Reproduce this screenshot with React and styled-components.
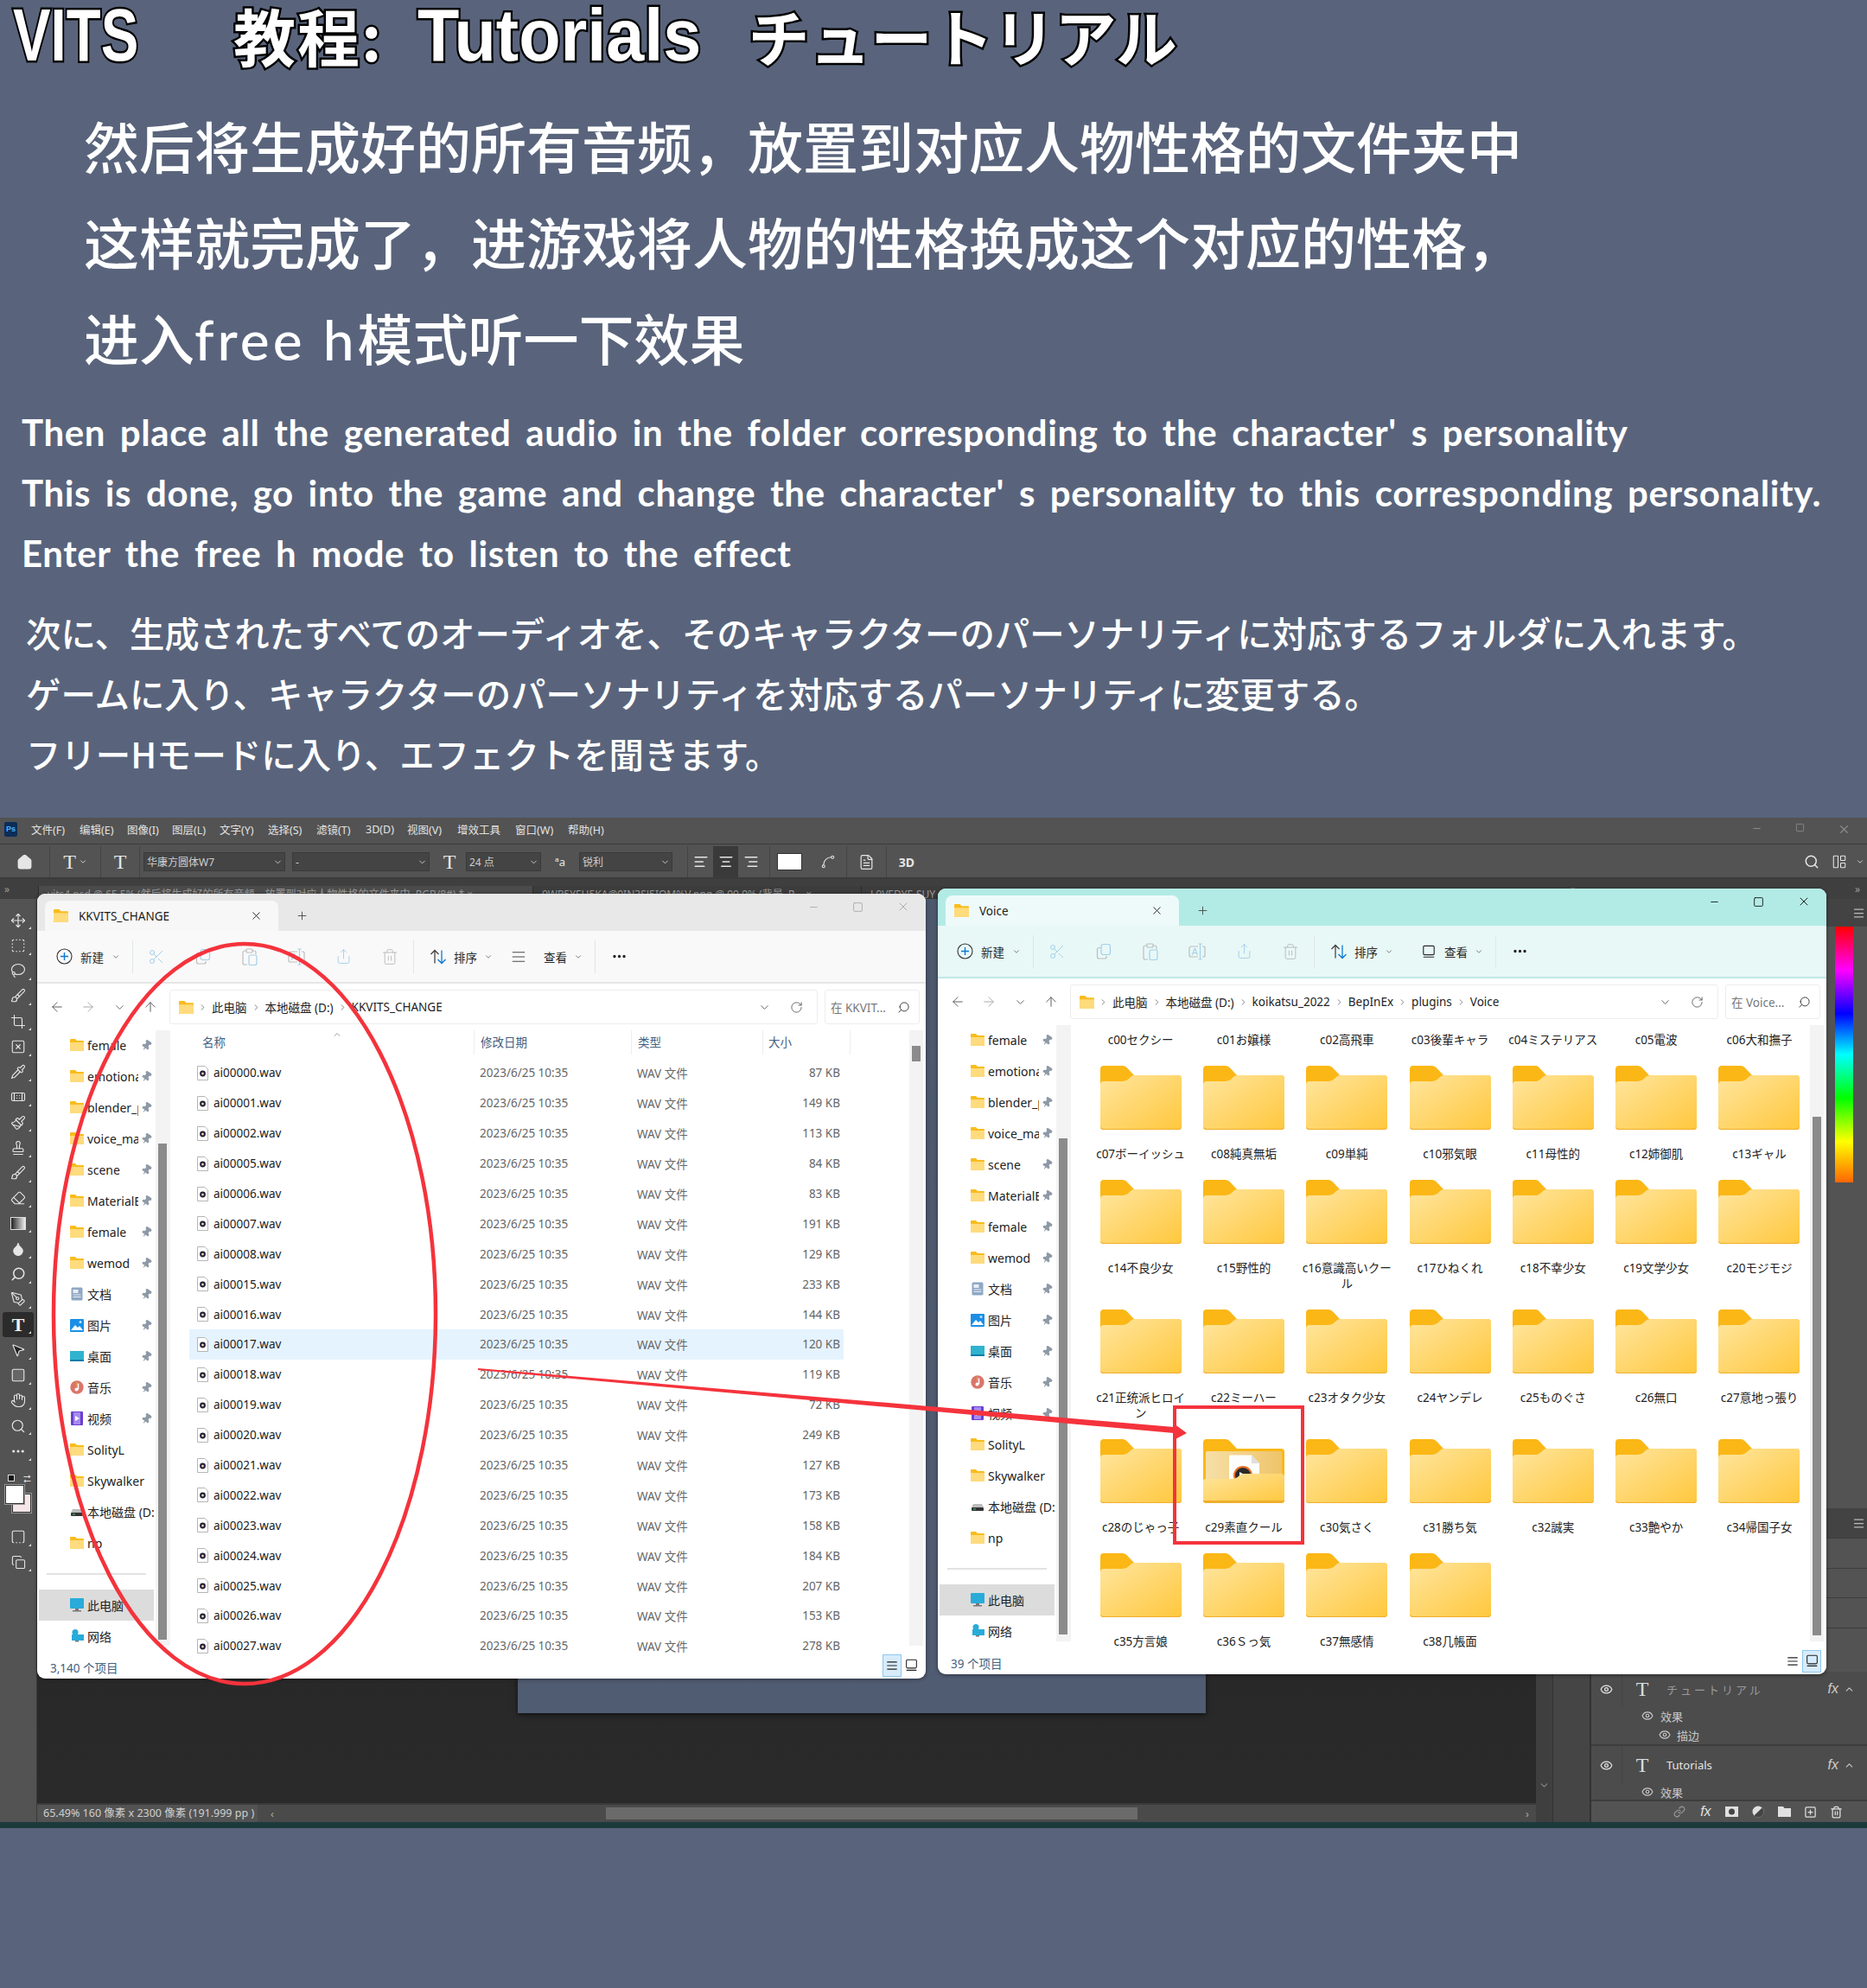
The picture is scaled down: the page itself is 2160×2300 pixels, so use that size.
import React from "react";
import styled, { createGlobalStyle } from "styled-components";
import {
  Move, SquareDashed, Lasso, Brush, Crop, SquareX, Pipette, Bandage, Paintbrush, Stamp, Eraser, Droplet, Search, PenTool, MousePointer2, Hand, Ellipsis, House, Square,
  Scissors, Copy, Share, Trash2, AlignJustify, ArrowLeft, ArrowRight, ChevronDown, ChevronRight, ChevronUp, ArrowUp, RotateCw, Pin, Plus, X, Minus, Eye, Link, SquareDashedBottom, FileText, Menu, Spline, LayoutPanelLeft, AlignCenter, AlignLeft, AlignRight, SquarePlus
} from "lucide-react";

const UI = `"Noto Sans", "Noto Sans CJK SC", sans-serif`;
const UIJ = `"Noto Sans", "Noto Sans CJK JP", sans-serif`;

const Global = createGlobalStyle`
  html, body { margin: 0; padding: 0; background: #59647c; }
  * { box-sizing: border-box; }
`;

const Page = styled.div`
  position: relative;
  width: 2160px;
  height: 2300px;
  overflow: hidden;
  background: #59647c;
  color: #fff;
  font-family: ${UI};
`;

const Intro = styled.header`
  height: 946px;
  display: flex;
  flex-direction: column;
`;
const Title = styled.h1`
  margin: 0;
  height: 80px;
  display: flex;
  align-items: center;
  padding-left: 15px;
  font-weight: 700;
  line-height: 80px;
  color: #fff;
  -webkit-text-stroke: 5px #000;
  paint-order: stroke fill;
`;
const TitleLatin = styled.span`
  display: inline-block;
  font-family: "Liberation Sans", sans-serif;
  font-size: 86px;
  width: ${(p) => p.$w}px;
  transform: scaleX(${(p) => p.$sx});
  transform-origin: left center;
  white-space: nowrap;
  -webkit-text-stroke: 5px #000;
  paint-order: stroke fill;
`;
const TitleCjk = styled.span`
  display: inline-block;
  font-family: "Noto Sans CJK JP", sans-serif;
  font-size: ${(p) => p.$fs}px;
  letter-spacing: ${(p) => p.$ls || 0}px;
  margin-right: ${(p) => p.$mr}px;
  white-space: nowrap;
  font-weight: 700;
`;
const CnBlock = styled.div`
  margin-top: 32px;
  padding-left: 97px;
  font-family: "Noto Sans CJK SC", sans-serif;
  font-size: 64px;
  font-weight: 500;
  line-height: 111px;
  white-space: nowrap;
`;
const FreeH = styled.span`
  font-family: "Lato", sans-serif;
  letter-spacing: 4px;
`;
const EnBlock = styled.div`
  margin-top: 17px;
  padding-left: 25px;
  font-family: "Lato", sans-serif;
  font-size: 42px;
  font-weight: 700;
  line-height: 70px;
  white-space: nowrap;
  letter-spacing: 0.6px;
  word-spacing: 6px;
`;
const JpBlock = styled.div`
  margin-top: 22px;
  padding-left: 30px;
  font-family: "Noto Sans CJK JP", sans-serif;
  font-size: 40.4px;
  font-weight: 500;
  line-height: 70px;
  white-space: nowrap;
`;

/* ------------- Photoshop ------------- */
const Ps = styled.div`
  height: 1169px;
  display: flex;
  flex-direction: column;
  background: #535353;
  color: #ddd;
`;
const MenuBar = styled.div`
  height: 31px;
  display: flex;
  align-items: center;
  padding: 0 0 3px 5px;
  background: #535353;
  border-bottom: 1px solid #3a3a3a;
  font-size: 12.5px;
  color: #e2e2e2;
`;
const PsLogo = styled.span`
  width: 15px;
  height: 17px;
  border-radius: 2px;
  background: #0b2d58;
  color: #4fb4ff;
  font: 700 9px/17px "Liberation Sans", sans-serif;
  text-align: center;
  margin-right: 16px;
`;
const MenuItem = styled.span`
  width: ${(p) => p.$w}px;
  white-space: nowrap;
`;
const PsWinBtns = styled.div`
  margin-left: auto;
  display: flex;
  gap: 38px;
  padding-right: 19px;
  color: #8a8a8a;
`;
const OptionsBar = styled.div`
  height: 40px;
  display: flex;
  align-items: center;
  padding-top: 2px;
  background: #535353;
  border-bottom: 2px solid #3b3b3b;
  color: #e6e6e6;
`;
const OptSlot = styled.div`
  width: ${(p) => p.$w}px;
  height: 100%;
  flex: none;
  display: flex;
  align-items: center;
  justify-content: center;
  gap: 3px;
  font-size: ${(p) => p.$fs || 13}px;
  font-weight: ${(p) => p.$fw || 400};
  ${(p) => (p.$sep ? "border-right: 1px solid #444;" : "")}
  ${(p) => (p.$on ? "background:#3a3a3a;" : "")}
`;
const OptT = styled.span`
  font: 24px "Liberation Serif", serif;
  color: #e6e6e6;
`;
const OptSelect = styled.div`
  width: ${(p) => p.$w}px;
  height: 22px;
  margin: 0 ${(p) => p.$m || 0}px;
  flex: none;
  background: #444;
  border: 1px solid #3a3a3a;
  display: flex;
  align-items: center;
  justify-content: space-between;
  padding: 0 2px 0 3px;
  font-size: 12px;
  color: #cfcfcf;
`;
const Swatch = styled.div`
  width: 29px;
  height: 20px;
  background: #fff;
  border: 1px solid #333;
  margin: 0 8px;
`;
const OptSpacer = styled.div`
  flex: 1;
`;
const DocTabs = styled.div`
  height: 23px;
  display: flex;
  align-items: flex-end;
  background: #3f3f3f;
  font-size: 12px;
  color: #9a9a9a;
  white-space: nowrap;
  overflow: hidden;
`;
const Collapse = styled.span`
  width: ${(p) => p.$w}px;
  flex: none;
  align-self: center;
  padding-left: ${(p) => p.$pl ?? 5}px;
  font-size: 12px;
  color: #9c9c9c;
`;
const DocTab = styled.span`
  width: ${(p) => p.$w}px;
  flex: none;
  height: 15px;
  line-height: 20px;
  padding-left: 10px;
  background: ${(p) => (p.$on ? "#4b4b4b" : "#3c3c3c")};
  border-left: 1px solid #2c2c2c;
  overflow: hidden;
`;
const Workspace = styled.div`
  flex: 1;
  min-height: 0;
  display: flex;
`;
const Tools = styled.div`
  width: 43px;
  flex: none;
  padding-top: 10px;
  display: flex;
  flex-direction: column;
  align-items: center;
  background: #535353;
  border-right: 1px solid #3a3a3a;
  color: #e6e6e6;
`;
const Tool = styled.div`
  position: relative;
  width: 36px;
  height: 29.25px;
  flex: none;
  display: flex;
  align-items: center;
  justify-content: center;
  border-radius: 3px;
  ${(p) => (p.$on ? "background:#2b2b2b;" : "")}
  &::after {
    content: "";
    position: absolute;
    right: 3px;
    bottom: 4px;
    border-left: 3px solid transparent;
    border-bottom: 3px solid #ddd;
  }
`;
const ToolT = styled.span`
  font: 700 22px/1 "Liberation Serif", serif;
  color: #f0f0f0;
`;
const GradientBox = styled.span`
  width: 18px;
  height: 15px;
  border: 1px solid #ddd;
  background: linear-gradient(90deg, #222, #eee);
`;
const ColorPair = styled.div`
  position: relative;
  width: 36px;
  height: 52px;
  margin: 12px 0 6px;
`;
const MiniReset = styled.span`
  position: absolute;
  left: 6px;
  top: 0;
  width: 8px;
  height: 8px;
  background: #111;
  border: 1px solid #ddd;
`;
const MiniSwap = styled.span`
  position: absolute;
  left: 24px;
  top: -3px;
  font-size: 11px;
  color: #ddd;
`;
const Chip = styled.span`
  position: absolute;
  width: 22px;
  height: 22px;
  left: ${(p) => p.$l}px;
  top: ${(p) => p.$t}px;
  background: ${(p) => p.$c};
  border: 1px solid #333;
  box-shadow: 0 0 0 1px #999;
`;
const CanvasCol = styled.div`
  flex: 1;
  min-width: 0;
  display: flex;
  flex-direction: column;
`;
const Canvas = styled.div`
  flex: 1;
  min-height: 0;
  background: linear-gradient(#1f1f1f, #2a2a2a);
  padding-left: 556px;
`;
const Doc = styled.div`
  width: 796px;
  height: 942px;
  background: linear-gradient(#4c586c, #505c72);
  box-shadow: 0 2px 6px rgba(0, 0, 0, 0.6);
`;
const PsStatus = styled.div`
  height: 22px;
  flex: none;
  display: flex;
  align-items: center;
  background: #4a4a4a;
  border-top: 2px solid #3a3a3a;
  font-size: 12.5px;
  color: #cfcfcf;
`;
const StatusText = styled.span`
  width: 255px;
  flex: none;
  padding-left: 7px;
  line-height: 20px;
  background: #535353;
  white-space: nowrap;
`;
const HThumbTrack = styled.div`
  flex: 1;
  display: flex;
  align-items: center;
  height: 100%;
  padding: 0 8px 0 15px;
  color: #aaa;
`;
const HThumb = styled.div`
  width: 615px;
  height: 14px;
  margin-left: 384px;
  margin-right: auto;
  background: #6b6b6b;
`;
const VScrollCol = styled.div`
  width: 19px;
  flex: none;
  background: #3f3f3f;
  display: flex;
  flex-direction: column;
  justify-content: flex-end;
  align-items: center;
  padding-bottom: 36px;
  color: #888;
`;
const Gutter = styled.div`
  width: 45px;
  flex: none;
  background: #454545;
  border-left: 1px solid #333;
  border-right: 2px solid #333;
`;
const RightPanel = styled.div`
  width: 319px;
  flex: none;
  display: flex;
  flex-direction: column;
  background: #535353;
`;
const PanelHead = styled.div`
  height: 32px;
  flex: none;
  display: flex;
  align-items: center;
  justify-content: flex-end;
  padding-right: 2px;
  background: #434343;
  color: #bbb;
`;
const Rainbow = styled.div`
  width: 21px;
  height: 296px;
  flex: none;
  margin-left: 282px;
  background: linear-gradient(#f00 0%, #f0f 17%, #00f 34%, #0ff 50%, #0f0 67%, #ff0 84%, #f60 100%);
`;
const PanelBand = styled.div`
  margin-top: ${(p) => p.$mt || 0}px;
  height: ${(p) => p.$h}px;
  flex: none;
  display: flex;
  align-items: center;
  justify-content: flex-end;
  padding-right: 2px;
  background: ${(p) => p.$bg || "#535353"};
  border-bottom: 1px solid #3d3d3d;
  color: #bbb;
`;
const Layers = styled.div`
  margin-top: auto;
  display: flex;
  flex-direction: column;
  background: #4c4c4c;
`;
const LayerRow = styled.div`
  height: ${(p) => p.$h}px;
  flex: none;
  display: flex;
  align-items: center;
  padding-left: ${(p) => p.$pl || 0}px;
  padding-right: 14px;
  gap: ${(p) => p.$gap || 0}px;
  font-size: 13px;
  color: #c8c8c8;
  overflow: hidden;
  ${(p) => (p.$div ? "border-top: 2px solid #3d3d3d;" : "")}
`;
const EyeCol = styled.div`
  width: 36px;
  height: 100%;
  flex: none;
  display: flex;
  align-items: center;
  justify-content: center;
  border-right: 1px solid #444;
  color: #e4e4e4;
`;
const LayerT = styled.span`
  width: 46px;
  text-align: center;
  font: 24px "Liberation Serif", serif;
  color: #ddd;
`;
const LayerName = styled.span`
  margin-left: 5px;
  color: ${(p) => p.$c};
  font-family: ${(p) => (p.$jp ? UIJ : UI)};
  letter-spacing: ${(p) => p.$ls || 0}px;
`;
const LayerFx = styled.span`
  margin-left: auto;
  padding-right: 6px;
  font: italic 16px "Liberation Sans", sans-serif;
  color: #ccc;
`;
const LayerFoot = styled.div`
  height: 26px;
  flex: none;
  display: flex;
  align-items: center;
  justify-content: flex-end;
  padding-right: 20px;
  background: #535353;
  border-top: 2px solid #3d3d3d;
  color: #e0e0e0;
`;
const FootSlot = styled.span`
  width: 30.3px;
  display: flex;
  justify-content: center;
  font: italic 16px "Liberation Sans", sans-serif;
`;
const PsEdge = styled.div`
  height: 7px;
  flex: none;
  background: #1c3a3c;
`;

/* ------------- Explorer ------------- */
const Win = styled.section`
  position: absolute;
  left: ${(p) => p.$x}px;
  top: ${(p) => p.$y}px;
  width: ${(p) => p.$w}px;
  height: ${(p) => p.$h}px;
  display: flex;
  flex-direction: column;
  background: #fff;
  border-radius: 9px;
  overflow: hidden;
  color: #1c1c1c;
  font-family: ${UI};
  font-size: 13.5px;
  box-shadow: 0 1px 4px rgba(0, 0, 0, 0.45);
`;
const WinTitle = styled.div`
  height: 43px;
  flex: none;
  display: flex;
  align-items: flex-end;
  padding-left: 9px;
  background: ${(p) => (p.$teal ? "#b2ebe5" : "#e8e8e8")};
`;
const WinTab = styled.div`
  width: 270px;
  height: 35px;
  display: flex;
  align-items: center;
  padding: 0 18px 0 10px;
  background: ${(p) => (p.$teal ? "#eefafa" : "#f7f7f7")};
  border-radius: 8px 8px 0 0;
`;
const TabName = styled.span`
  margin-left: 12px;
  font-size: 13.5px;
  flex: 1;
`;
const TabPlus = styled.span`
  width: 54px;
  height: 35px;
  display: flex;
  align-items: center;
  justify-content: center;
  color: #444;
`;
const WinBtns = styled.div`
  margin-left: auto;
  align-self: flex-start;
  display: flex;
  height: 30px;
  align-items: center;
  padding-right: 18px;
  gap: 38px;
  color: ${(p) => (p.$dim ? "#a8a8a8" : "#111")};
`;
const WinToolbar = styled.div`
  height: 61px;
  flex: none;
  display: flex;
  align-items: center;
  padding-left: 22px;
  background: ${(p) => (p.$teal ? "#e8f8f7" : "#f9f9f9")};
  border-bottom: 2px solid ${(p) => (p.$teal ? "#c0e8e3" : "#e6e6e6")};
`;
const TbBtn = styled.div`
  width: ${(p) => p.$w}px;
  flex: none;
  height: 36px;
  display: flex;
  align-items: center;
  justify-content: ${(p) => (p.$center ? "center" : "flex-start")};
  gap: ${(p) => p.$gap ?? 8}px;
  padding-left: ${(p) => p.$pl || 0}px;
  font-size: 13.5px;
  color: #2a2a2a;
`;
const ViewLabel = styled.span`
  margin-left: ${(p) => p.$ml}px;
`;
const TbSep = styled.div`
  width: 1px;
  height: 38px;
  flex: none;
  background: #e0e6e6;
`;
const AddrRow = styled.div`
  height: 54px;
  flex: none;
  display: flex;
  align-items: center;
  padding-left: 5px;
  color: #5a5a5a;
`;
const NavBtn = styled.div`
  width: 36px;
  flex: none;
  display: flex;
  justify-content: center;
  color: ${(p) => (p.$dim ? "#a9a9a9" : "#5a5a5a")};
`;
const AddrBox = styled.div`
  width: 750px;
  height: 40px;
  flex: none;
  margin-left: 4px;
  display: flex;
  align-items: center;
  gap: 5px;
  padding: 0 10px;
  border: 1px solid #ededed;
  border-radius: 3px;
  font-size: 13.5px;
  color: #222;
`;
const AddrEnd = styled.div`
  margin-left: auto;
  display: flex;
  gap: 22px;
  padding-right: 6px;
  color: #555;
`;
const SearchBox = styled.div`
  width: 110px;
  height: 40px;
  flex: none;
  margin-left: 8px;
  display: flex;
  align-items: center;
  justify-content: space-between;
  padding: 0 10px 0 6px;
  border: 1px solid #ededed;
  border-radius: 3px;
  font-size: 13.5px;
  color: #777;
  white-space: nowrap;
`;
const FlipSearch = styled(Search)`
  transform: scaleX(-1);
`;
const WinBody = styled.div`
  flex: 1;
  min-height: 0;
  display: flex;
`;
const Nav = styled.nav`
  width: 137px;
  flex: none;
  margin-top: -1px;
  display: flex;
  flex-direction: column;
`;
const NavRow = styled.div`
  height: 36px;
  flex: none;
  display: flex;
  align-items: center;
  margin-left: ${(p) => (p.$top ? 2 : 0)}px;
  margin-right: ${(p) => (p.$top ? 2 : 0)}px;
  padding-left: ${(p) => (p.$top ? 36 : 38)}px;
  font-size: 14px;
  color: #222;
  ${(p) => (p.$on ? "background:#dcdcdc;" : "")}
`;
const NavLabel = styled.span`
  width: ${(p) => p.$w}px;
  margin-left: 4px;
  overflow: hidden;
  white-space: nowrap;
  flex: none;
`;
const NavPin = styled(Pin)`
  margin-left: 3px;
  transform: rotate(35deg);
`;
const NavChevron = styled.span`
  width: 0;
  position: relative;
  left: -22px;
  color: #777;
  display: inline-flex;
`;
const NavDivider = styled.div`
  height: 2px;
  flex: none;
  margin: 17px 11px 17px 11px;
  background: #e2e2e2;
`;
const NavTrack = styled.div`
  width: 17px;
  flex: none;
  background: #f3f3f3;
  padding: ${(p) => p.$top}px 3px 0 3px;
  margin-right: 3px;
  margin-bottom: 6px;
`;
const NavThumb = styled.div`
  width: 10px;
  height: 574px;
  background: #8b8b8b;
`;
const ListPane = styled.div`
  flex: 1;
  min-width: 0;
  display: flex;
  flex-direction: column;
`;
const ListHead = styled.div`
  height: 28px;
  flex: none;
  margin-bottom: 4px;
  display: grid;
  grid-template-columns: 349px 182px 152px 101px;
  color: #44607e;
  font-size: 13.5px;
  align-items: center;
`;
const HeadCell = styled.div`
  padding-left: ${(p) => p.$pl}px;
  line-height: 28px;
  ${(p) => (p.$sep ? "border-right: 1px solid #eeeeee;" : "")}
  position: relative;
`;
const SortCaret = styled.span`
  position: absolute;
  left: 184px;
  top: -8px;
  color: #9a9a9a;
`;
const FileRow = styled.div`
  height: 34.9px;
  flex: none;
  display: grid;
  grid-template-columns: 336px 182px 152px 87px;
  align-items: center;
  width: 757px;
  margin-left: 19px;
  color: #666;
  background: ${(p) => (p.$on ? "#e5f3ff" : "transparent")};
`;
const FileName = styled.div`
  padding-left: 9px;
  display: flex;
  align-items: center;
  gap: 6px;
  color: #222;
`;
const FileCell = styled.div`
  ${(p) => (p.$right ? "text-align: right; padding-right: 4px;" : "")}
`;
const VBar = styled.div`
  width: 16px;
  flex: none;
  margin: 0 3px 6px 0;
  background: #f3f3f3;
  padding-top: ${(p) => p.$top}px;
  display: flex;
  justify-content: center;
`;
const VThumb = styled.div`
  width: 10px;
  height: ${(p) => p.$h}px;
  background: #8b8b8b;
`;
const WinStatus = styled.div`
  height: 32px;
  flex: none;
  display: flex;
  align-items: center;
  padding: 5px 0 0 15px;
  font-size: 13.5px;
  color: #44607e;
`;
const ViewBtns = styled.div`
  margin-left: auto;
  height: 100%;
  display: flex;
  align-items: center;
  padding: 0 6px 4px 0;
  color: #222;
`;
const ViewBtn = styled.div`
  width: 22px;
  height: 26px;
  display: flex;
  align-items: center;
  justify-content: center;
  ${(p) => (p.$on ? "background:#d7ecfb; border:1px solid #8fc7ec;" : "")}
`;
const FolderGrid = styled.div`
  flex: 1;
  min-width: 0;
  display: grid;
  grid-template-columns: repeat(7, 119.3px);
  grid-auto-rows: min-content;
  padding-left: 18px;
  padding-top: 8px;
  align-content: start;
`;
const FolderCell = styled.div`
  display: flex;
  flex-direction: column;
  align-items: center;
  padding-bottom: 21px;
`;
const FolderLabel = styled.div`
  width: 108px;
  margin-top: ${(p) => (p.$only ? 0 : 19)}px;
  text-align: center;
  line-height: 18px;
  font-family: ${UIJ};
  font-size: 13.5px;
  color: #222;
  word-break: break-all;
`;
const Markup = styled.svg`
  position: absolute;
  left: 0;
  top: 0;
  width: 2160px;
  height: 2300px;
  pointer-events: none;
`;

/* ---- drawings ---- */
function FolderArt({ open }) {
  const id = open ? "fo" : "fc";
  return (
    <svg width="94" height="74" viewBox="0 0 94 74">
      <defs>
        <linearGradient id={id} x1="0" y1="0" x2="1" y2="1">
          <stop offset="0" stopColor="#ffe59e" />
          <stop offset="1" stopColor="#ffc83e" />
        </linearGradient>
        <linearGradient id="fi" x1="0" y1="0" x2="1" y2="0">
          <stop offset="0" stopColor="#f6dfa6" />
          <stop offset="1" stopColor="#efc46a" />
        </linearGradient>
      </defs>
      <path d="M4 0H26q3 0 5 2.500l8 8.500H90q4 0 4 4V70q0 4-4 4H4q-4 0-4-4V4q0-4 4-4z" fill="#fbb716" />
      {open ? (
        <>
          <rect x="3" y="14" width="88" height="38" rx="2" fill="url(#fi)" />
          <path d="M30 18.500H56L65 28V50H30z" fill="#fdfdfd" />
          <path d="M56 18.500V28H65z" fill="#dedede" />
          <circle cx="46" cy="42" r="11" fill="#e8702a" />
          <circle cx="46" cy="42" r="9" fill="#2a2a2a" />
          <path d="M42 38l8 4h-8z" fill="#fff" />
          <path d="M0 49q0-3 3-3H34q4 0 7-3l1-1q2-2 5-2H90q4 0 4 4V70q0 3-4 3H4q-4 0-4-3z" fill={`url(#${id})`} />
          <path d="M0 71q0 3 4 3H90q4 0 4-3z" fill="#efae2b" />
        </>
      ) : (
        <>
          <path d="M0 22q0-4 4-4H26q4 0 7-3l2-2q2-2 5-2H90q4 0 4 4V70q0 3-4 3H4q-4 0-4-3z" fill={`url(#${id})`} />
          <path d="M0 70q0 3 4 3H90q4 0 4-3v1q0 3-4 3H4q-4 0-4-3z" fill="#efae2b" />
        </>
      )}
    </svg>
  );
}
const SmallFolder = ({ size = 16 }) => (
  <svg width={size} height={size} viewBox="0 0 16 16" style={{ flex: "none" }}>
    <path d="M0 2q0-1 1-1H6l2 2h7q1 0 1 1v10q0 1-1 1H1q-1 0-1-1z" fill="#f9bc1c" />
    <path d="M0 5h16v9q0 1-1 1H1q-1 0-1-1z" fill="#fedb7c" />
  </svg>
);
const NavGlyph = ({ kind }) => {
  const wrap = (c) => <svg width="16" height="16" viewBox="0 0 16 16" style={{ flex: "none" }}>{c}</svg>;
  switch (kind) {
    case "doc":
      return wrap(<><rect x="1.500" y="0.500" width="13" height="15" rx="1.500" fill="#8ea7c4" /><rect x="3.500" y="3" width="6" height="4" fill="#e8eef5" /><path d="M3.500 9h9M3.500 11.500h9" stroke="#e8eef5" /></>);
    case "pic":
      return wrap(<><rect x="0" y="1" width="16" height="15" rx="1" fill="#1b8fe6" /><path d="M1 14l5-6 3 3 2-2 4 5z" fill="#fff" /><circle cx="12" cy="4.500" r="1.500" fill="#bfe4ff" /></>);
    case "desk":
      return wrap(<><rect x="-1" y="2" width="18" height="12" rx="1" fill="#2fb3cf" /><rect x="-1" y="12" width="18" height="2" fill="#0d7da6" /></>);
    case "music":
      return wrap(<><circle cx="8" cy="8" r="7.700" fill="#d9766a" /><path d="M8 8.500a7.700 7.700 0 0 1 0-8.200z" fill="#e89a4a" /><path d="M9.500 3.500v7" stroke="#fff" strokeWidth="1.500" /><circle cx="7.500" cy="10.500" r="2" fill="#fff" /></>);
    case "video":
      return wrap(<><rect x="1" y="0" width="14" height="16" rx="1" fill="#6b3fd0" /><rect x="4" y="1" width="8" height="14" fill="#a68af0" /><path d="M6 5l5 3-5 3z" fill="#fff" /></>);
    case "disk":
      return wrap(<><path d="M3 5h10l2 4H1z" fill="#bdbdbd" /><rect x="1" y="9" width="14" height="4" rx="1" fill="#333" /><rect x="3" y="10.500" width="3" height="1" fill="#35d06a" /></>);
    case "pc":
      return wrap(<><rect x="0" y="0" width="16" height="12" rx="1" fill="#29abd9" /><rect x="6" y="12" width="4" height="2" fill="#777" /><rect x="3" y="14" width="10" height="1.500" fill="#777" /></>);
    case "net":
      return wrap(<><circle cx="6" cy="3.500" r="3.500" fill="#29abd9" /><rect x="2" y="6" width="14" height="7" fill="#29abd9" /><rect x="6" y="13" width="4" height="1.500" fill="#777" /></>);
    default:
      return <SmallFolder />;
  }
};
const WavIcon = () => (
  <svg width="13" height="17" viewBox="0 0 13 17" style={{ flex: "none" }}>
    <path d="M.5.5H9L12.500 4V16.500H.5z" fill="#fff" stroke="#b5b5b5" />
    <circle cx="6.500" cy="9" r="3.400" fill="#20203a" />
    <circle cx="6.500" cy="9" r="1.500" fill="#f1a06b" />
    <circle cx="6.500" cy="9" r="0.700" fill="#fff" />
  </svg>
);
const NewIcon = () => (
  <svg width="19" height="19" viewBox="0 0 19 19" fill="none">
    <circle cx="9.500" cy="9.500" r="8.500" stroke="#333" strokeWidth="1.100" />
    <path d="M9.500 5v9M5 9.500h9" stroke="#0a78d4" strokeWidth="1.400" />
  </svg>
);
const CopyIcon = ({ g, b }) => (
  <svg width="20" height="20" viewBox="0 0 20 20" fill="none">
    <path d="M6 5.500H4.500a2 2 0 0 0-2 2V16a2 2 0 0 0 2 2H11a2 2 0 0 0 2-2v-1" stroke={g} strokeWidth="1.200" />
    <rect x="7" y="1.500" width="10.500" height="12" rx="2.500" stroke={b} strokeWidth="1.200" />
  </svg>
);
const PasteIcon = ({ g, b }) => (
  <svg width="20" height="20" viewBox="0 0 20 20" fill="none">
    <path d="M6 3H4a2 2 0 0 0-2 2v12a2 2 0 0 0 2 2h3M13 3h2a2 2 0 0 1 2 2v2" stroke={g} strokeWidth="1.200" />
    <rect x="6" y="1" width="7" height="4" rx="1" stroke={g} strokeWidth="1.200" />
    <rect x="9" y="8" width="9" height="11.500" rx="2" stroke={b} strokeWidth="1.200" />
  </svg>
);
const RenameIcon = ({ g, b }) => (
  <svg width="20" height="20" viewBox="0 0 20 20" fill="none">
    <path d="M11 4H3a2 2 0 0 0-2 2v8a2 2 0 0 0 2 2h8M16 4h1.500a1.500 1.500 0 0 1 1.500 2v8a2 2 0 0 1-2 2H16" stroke={g} strokeWidth="1.200" />
    <path d="M11.500 1h2v18h-2M15.500 1h-2M15.500 19h-2" stroke={b} strokeWidth="1.200" />
    <text x="3.500" y="14" fontSize="11" fontFamily="Liberation Sans" fill={b}>A</text>
  </svg>
);
const SortIcon = () => (
  <svg width="20" height="20" viewBox="0 0 20 20" fill="none" strokeWidth="1.300">
    <path d="M6 17.500V2.500M1.500 7L6 2.500 10.500 7" stroke="#444" />
    <path d="M14 2.500v15M9.500 13l4.500 4.500 4.500-4.500" stroke="#0a78d4" />
  </svg>
);
const TabletIcon = ({ size = 16 }) => (
  <svg width={size} height={size} viewBox="0 0 18 18" fill="none" stroke="currentColor" strokeWidth="1.300">
    <rect x="2" y="1.500" width="14" height="11.500" rx="1.500" />
    <path d="M2 16h14" />
  </svg>
);
const MaskIcon = () => (
  <svg width="15" height="12" viewBox="0 0 15 12"><rect width="15" height="12" fill="#e0e0e0" /><circle cx="7.500" cy="6" r="3.500" fill="#444" /></svg>
);
const AdjustIcon = () => (
  <svg width="14" height="14" viewBox="0 0 14 14"><circle cx="7" cy="7" r="6.500" fill="#e0e0e0" /><path d="M11.600 2.400a6.500 6.500 0 0 1-9.200 9.200z" fill="#444" /></svg>
);
const PsFolderIcon = () => (
  <svg width="15" height="12" viewBox="0 0 15 12"><path d="M0 0h6l1.500 2H15v10H0z" fill="#e0e0e0" /></svg>
);

/* ---- data ---- */
const navItems = [
  ["female", "folder", 1], ["emotional", "folder", 1], ["blender_proj", "folder", 1], ["voice_made", "folder", 1], ["scene", "folder", 1],
  ["MaterialEditor", "folder", 1], ["female", "folder", 1], ["wemod", "folder", 1], ["文档", "doc", 1], ["图片", "pic", 1], ["桌面", "desk", 1],
  ["音乐", "music", 1], ["视频", "video", 1], ["SolityL", "folder", 0], ["Skywalker", "folder", 0], ["本地磁盘 (D:)", "disk", 0], ["np", "folder", 0],
];
const files = [
  ["00000", 87], ["00001", 149], ["00002", 113], ["00005", 84], ["00006", 83], ["00007", 191], ["00008", 129], ["00015", 233], ["00016", 144], ["00017", 120],
  ["00018", 119], ["00019", 72], ["00020", 249], ["00021", 127], ["00022", 173], ["00023", 158], ["00024", 184], ["00025", 207], ["00026", 153], ["00027", 278],
];
const topLabels = ["c00セクシー", "c01お嬢様", "c02高飛車", "c03後輩キャラ", "c04ミステリアス", "c05電波", "c06大和撫子"];
const folders = [
  "c07ボーイッシュ", "c08純真無垢", "c09単純", "c10邪気眼", "c11母性的", "c12姉御肌", "c13ギャル",
  "c14不良少女", "c15野性的", "c16意識高いクール", "c17ひねくれ", "c18不幸少女", "c19文学少女", "c20モジモジ",
  "c21正统派ヒロイン", "c22ミーハー", "c23オタク少女", "c24ヤンデレ", "c25ものぐさ", "c26無口", "c27意地っ張り",
  "c28のじゃっ子", "c29素直クール", "c30気さく", "c31勝ち気", "c32誠実", "c33艶やか", "c34帰国子女",
  "c35方言娘", "c36Ｓっ気", "c37無感情", "c38几帳面",
];
const menus = [["文件(F)", 56], ["编辑(E)", 55], ["图像(I)", 52], ["图层(L)", 55], ["文字(Y)", 56], ["选择(S)", 56], ["滤镜(T)", 57], ["3D(D)", 48], ["视图(V)", 58], ["增效工具", 67], ["窗口(W)", 61], ["帮助(H)", 60]];
const toolIcons = [
  <Move size={18} strokeWidth={1.5} />, <SquareDashed size={18} strokeWidth={1.5} />, <Lasso size={18} strokeWidth={1.5} />, <Brush size={18} strokeWidth={1.5} />,
  <Crop size={18} strokeWidth={1.5} />, <SquareX size={18} strokeWidth={1.5} />, <Pipette size={18} strokeWidth={1.5} />, <Bandage size={18} strokeWidth={1.5} />,
  <Paintbrush size={18} strokeWidth={1.5} />, <Stamp size={18} strokeWidth={1.5} />, <Brush size={18} strokeWidth={1.5} />, <Eraser size={18} strokeWidth={1.5} />,
  <GradientBox />, <Droplet size={18} strokeWidth={1.5} fill="#e6e6e6" />, <FlipSearch size={18} strokeWidth={2} />, <PenTool size={18} strokeWidth={1.5} />,
  <ToolT>T</ToolT>, <MousePointer2 size={18} strokeWidth={1.5} fill="#222" />, <Square size={18} strokeWidth={1.5} fill="#666" />, <Hand size={18} strokeWidth={1.5} />,
  <Search size={18} strokeWidth={1.5} />, <Ellipsis size={18} strokeWidth={2.2} />,
];

const Window = ({ x, y, w, h, teal, title, crumbs, searchText, viewIcon, viewPl, viewMl, count, children, viewOn }) => {
  const g = "#bdbdbd";
  const b = "#a3d0ea";
  return (
    <Win $x={x} $y={y} $w={w} $h={h}>
      <WinTitle $teal={teal}>
        <WinTab $teal={teal}>
          <SmallFolder size={17} />
          <TabName>{title}</TabName>
          <X size={15} strokeWidth={1.4} />
        </WinTab>
        <TabPlus><Plus size={15} strokeWidth={1.4} /></TabPlus>
        <WinBtns $dim={!teal}>
          <Minus size={13} strokeWidth={1.6} />
          <Square size={13} strokeWidth={1.6} />
          <X size={16} strokeWidth={1.4} />
        </WinBtns>
      </WinTitle>
      <WinToolbar $teal={teal}>
        <TbBtn $w={88} $gap={9}>
          <NewIcon />
          新建
          <ChevronDown size={10} color="#666" />
        </TbBtn>
        <TbSep />
        <TbBtn $w={54} $center><Scissors size={20} strokeWidth={1.2} color={b} /></TbBtn>
        <TbBtn $w={54} $center><CopyIcon g={g} b={b} /></TbBtn>
        <TbBtn $w={54} $center><PasteIcon g={g} b={b} /></TbBtn>
        <TbBtn $w={54} $center><RenameIcon g={g} b={b} /></TbBtn>
        <TbBtn $w={54} $center><Share size={19} strokeWidth={1.2} color={b} /></TbBtn>
        <TbBtn $w={54} $center><Trash2 size={20} strokeWidth={1.2} color={g} /></TbBtn>
        <TbSep />
        <TbBtn $w={112} $pl={18}>
          <SortIcon />
          排序
          <ChevronDown size={10} color="#666" />
        </TbBtn>
        <TbBtn $w={97} $pl={viewPl}>
          {viewIcon}
          <ViewLabel $ml={viewMl}>查看</ViewLabel>
          <ChevronDown size={10} color="#666" />
        </TbBtn>
        <TbSep />
        <TbBtn $w={54} $center><Ellipsis size={19} color="#222" strokeWidth={2.2} /></TbBtn>
      </WinToolbar>
      <AddrRow>
        <NavBtn><ArrowLeft size={18} strokeWidth={1.3} /></NavBtn>
        <NavBtn $dim><ArrowRight size={18} strokeWidth={1.3} /></NavBtn>
        <NavBtn><ChevronDown size={15} strokeWidth={1.4} /></NavBtn>
        <NavBtn><ArrowUp size={18} strokeWidth={1.3} /></NavBtn>
        <AddrBox>
          <SmallFolder size={17} />
          {crumbs.map((t, i) => (
            <React.Fragment key={i}>
              <ChevronRight size={11} strokeWidth={1.6} color="#555" />
              <span>{t}</span>
            </React.Fragment>
          ))}
          <AddrEnd>
            <ChevronDown size={15} strokeWidth={1.4} />
            <RotateCw size={15} strokeWidth={1.4} />
          </AddrEnd>
        </AddrBox>
        <SearchBox>{searchText}<FlipSearch size={15} strokeWidth={1.6} color="#444" /></SearchBox>
      </AddrRow>
      <WinBody>
        <Nav>
          {navItems.map(([t, k, pin], i) => (
            <NavRow key={i}>
              <NavGlyph kind={k} />
              <NavLabel $w={pin ? 59 : 78}>{t}</NavLabel>
              {pin ? <NavPin size={13} color="#8d99a6" fill="#8d99a6" /> : null}
            </NavRow>
          ))}
          <NavDivider />
          <NavRow $top $on>
            <NavChevron><ChevronRight size={12} /></NavChevron>
            <NavGlyph kind="pc" /><NavLabel $w={60}>此电脑</NavLabel>
          </NavRow>
          <NavRow $top>
            <NavChevron><ChevronRight size={12} /></NavChevron>
            <NavGlyph kind="net" /><NavLabel $w={60}>网络</NavLabel>
          </NavRow>
        </Nav>
        <NavTrack $top={131}><NavThumb /></NavTrack>
        {children}
      </WinBody>
      <WinStatus>
        {count}
        <ViewBtns>
          <ViewBtn $on={!viewOn}><AlignJustify size={14} /></ViewBtn>
          <ViewBtn $on={viewOn}><TabletIcon size={15} /></ViewBtn>
        </ViewBtns>
      </WinStatus>
    </Win>
  );
};

export default function App() {
  return (
    <Page>
      <Global />
      <Intro>
        <Title>
          <TitleLatin $w={255} $sx={0.76}>VITS</TitleLatin>
          <TitleCjk $fs={72} $ls={2} $mr={40}>教程:</TitleCjk>
          <TitleLatin $w={382} $sx={0.92}>Tutorials</TitleLatin>
          <TitleCjk $fs={71} $mr={0}>チュートリアル</TitleCjk>
        </Title>
        <CnBlock>
          <div>然后将生成好的所有音频，放置到对应人物性格的文件夹中</div>
          <div>这样就完成了，进游戏将人物的性格换成这个对应的性格，</div>
          <div>进入<FreeH>free h</FreeH>模式听一下效果</div>
        </CnBlock>
        <EnBlock>
          <div>Then place all the generated audio in the folder corresponding to the character' s personality</div>
          <div>This is done, go into the game and change the character' s personality to this corresponding personality.</div>
          <div>Enter the free h mode to listen to the effect</div>
        </EnBlock>
        <JpBlock>
          <div>次に、生成されたすべてのオーディオを、そのキャラクターのパーソナリティに対応するフォルダに入れます。</div>
          <div>ゲームに入り、キャラクターのパーソナリティを対応するパーソナリティに変更する。</div>
          <div>フリーHモードに入り、エフェクトを聞きます。</div>
        </JpBlock>
      </Intro>

      <Ps>
        <MenuBar>
          <PsLogo>Ps</PsLogo>
          {menus.map(([m, w]) => <MenuItem key={m} $w={w}>{m}</MenuItem>)}
          <PsWinBtns>
            <Minus size={13} />
            <Square size={11} />
            <X size={15} />
          </PsWinBtns>
        </MenuBar>
        <OptionsBar>
          <OptSlot $w={58} $sep><House size={19} fill="#e6e6e6" /></OptSlot>
          <OptSlot $w={59} $sep><OptT>T</OptT><ChevronDown size={10} /></OptSlot>
          <OptSlot $w={45} $sep><OptT>T</OptT></OptSlot>
          <OptSelect $w={164} $m={4}>华康方圆体W7<ChevronDown size={11} /></OptSelect>
          <OptSelect $w={159} $m={4}>-<ChevronDown size={11} /></OptSelect>
          <OptSlot $w={38}><OptT>T</OptT></OptSlot>
          <OptSelect $w={87}>24 点<ChevronDown size={11} /></OptSelect>
          <OptSlot $w={44}>ªa</OptSlot>
          <OptSelect $w={108}>锐利<ChevronDown size={11} /></OptSelect>
          <OptSlot $w={18} $sep />
          <OptSlot $w={29}><AlignLeft size={18} /></OptSlot>
          <OptSlot $w={29} $on><AlignCenter size={18} /></OptSlot>
          <OptSlot $w={29}><AlignRight size={18} /></OptSlot>
          <OptSlot $w={8} $sep />
          <Swatch />
          <OptSlot $w={44} $sep><Spline size={18} strokeWidth={1.4} /></OptSlot>
          <OptSlot $w={46} $sep><FileText size={19} strokeWidth={1.5} /></OptSlot>
          <OptSlot $w={46} $fs={14} $fw={700}>3D</OptSlot>
          <OptSpacer />
          <OptSlot $w={32}><Search size={18} /></OptSlot>
          <OptSlot $w={32}><LayoutPanelLeft size={18} strokeWidth={1.4} /></OptSlot>
          <OptSlot $w={16}><ChevronDown size={10} /></OptSlot>
        </OptionsBar>
        <DocTabs>
          <Collapse $w={44}>»</Collapse>
          <DocTab $w={572} $on>vits4.psd @ 65.5% (然后将生成好的所有音频，放置到对应人物性格的文件夹中, RGB/8#) *  ×</DocTab>
          <DocTab $w={380}>0WP5YEH5KA@9IN3SJ5IOM%V.png @ 99.9% (背景, R...  ×</DocTab>
          <DocTab $w={300}>L0VEDYE-SUY</DocTab>
          <OptSpacer />
          <Collapse $w={325} $pl={0}>«</Collapse>
          <Collapse $w={19}>»</Collapse>
        </DocTabs>
        <Workspace>
          <Tools>
            {toolIcons.map((I, i) => (
              <Tool key={i} $on={i === 16}>{I}</Tool>
            ))}
            <ColorPair>
              <MiniReset />
              <MiniSwap>⮂</MiniSwap>
              <Chip $l={11} $t={22} $c="#f6e6e8" />
              <Chip $l={3} $t={12} $c="#fff" />
            </ColorPair>
            <Tool><SquareDashedBottom size={18} strokeWidth={1.5} /></Tool>
            <Tool><Copy size={17} strokeWidth={1.5} /></Tool>
          </Tools>
          <CanvasCol>
            <Canvas><Doc /></Canvas>
            <PsStatus>
              <StatusText>65.49% 160 像素 x 2300 像素 (191.999 pp )</StatusText>
              <HThumbTrack>
                ‹
                <HThumb />
                ›
              </HThumbTrack>
            </PsStatus>
          </CanvasCol>
          <VScrollCol><ChevronDown size={13} /></VScrollCol>
          <Gutter />
          <RightPanel>
            <PanelHead><Menu size={15} /></PanelHead>
            <Rainbow />
            <PanelBand $mt={377} $h={35} $bg="#434343"><Menu size={15} /></PanelBand>
            <PanelBand $h={35} />
            <PanelBand $h={34} />
            <PanelBand $h={35} />
            <Layers>
              <LayerRow $h={40}>
                <EyeCol><Eye size={15} /></EyeCol>
                <LayerT>T</LayerT>
                <LayerName $jp $c="#9a9a9a" $ls={3}>チュートリアル</LayerName>
                <LayerFx>fx</LayerFx>
                <ChevronUp size={13} />
              </LayerRow>
              <LayerRow $h={22} $pl={58} $gap={8}><Eye size={14} />效果</LayerRow>
              <LayerRow $h={22} $pl={78} $gap={7}><Eye size={14} />描边</LayerRow>
              <LayerRow $h={46} $div>
                <EyeCol><Eye size={15} /></EyeCol>
                <LayerT>T</LayerT>
                <LayerName $c="#e4e4e4">Tutorials</LayerName>
                <LayerFx>fx</LayerFx>
                <ChevronUp size={13} />
              </LayerRow>
              <LayerRow $h={18} $pl={58} $gap={8}><Eye size={14} />效果</LayerRow>
              <LayerFoot>
                <FootSlot><Link size={14} color="#999" /></FootSlot>
                <FootSlot>fx</FootSlot>
                <FootSlot><MaskIcon /></FootSlot>
                <FootSlot><AdjustIcon /></FootSlot>
                <FootSlot><PsFolderIcon /></FootSlot>
                <FootSlot><SquarePlus size={15} /></FootSlot>
                <FootSlot><Trash2 size={15} /></FootSlot>
              </LayerFoot>
            </Layers>
          </RightPanel>
        </Workspace>
        <PsEdge />
      </Ps>

      <Window x={43} y={1034} w={1028} h={908} title="KKVITS_CHANGE" crumbs={["此电脑", "本地磁盘 (D:)", "KKVITS_CHANGE"]} searchText="在 KKVIT..." viewIcon={<AlignJustify size={18} strokeWidth={1.3} color="#444" />} viewPl={0} viewMl={12} count="3,140 个项目">
        <ListPane>
          <ListHead>
            <HeadCell $pl={34} $sep>名称<SortCaret><ChevronUp size={12} /></SortCaret></HeadCell>
            <HeadCell $pl={7} $sep>修改日期</HeadCell>
            <HeadCell $pl={7} $sep>类型</HeadCell>
            <HeadCell $pl={6} $sep>大小</HeadCell>
          </ListHead>
          {files.map(([n, s]) => (
            <FileRow key={n} $on={n === "00017"}>
              <FileName><WavIcon />ai{n}.wav</FileName>
              <FileCell>2023/6/25 10:35</FileCell>
              <FileCell>WAV 文件</FileCell>
              <FileCell $right>{s} KB</FileCell>
            </FileRow>
          ))}
        </ListPane>
        <VBar $top={18}><VThumb $h={18} /></VBar>
      </Window>

      <Window teal viewOn x={1085} y={1028} w={1028} h={909} title="Voice" crumbs={["此电脑", "本地磁盘 (D:)", "koikatsu_2022", "BepInEx", "plugins", "Voice"]} searchText="在 Voice..." viewIcon={<TabletIcon size={16} />} viewPl={12} viewMl={2} count="39 个项目">
        <FolderGrid>
          {topLabels.map((t) => (
            <FolderCell key={t}><FolderLabel $only>{t}</FolderLabel></FolderCell>
          ))}
          {folders.map((t, i) => (
            <FolderCell key={t}>
              <FolderArt open={i === 22} />
              <FolderLabel>{t}</FolderLabel>
            </FolderCell>
          ))}
        </FolderGrid>
        <VBar $top={106}><VThumb $h={600} /></VBar>
      </Window>

      <Markup viewBox="0 0 2160 2300">
        <ellipse cx="283" cy="1520" rx="221" ry="428" fill="none" stroke="#f4333c" strokeWidth="4.500" />
        <path d="M553 1583L1358 1651L1358 1647L1373 1658L1358 1666L1358 1658L553 1585z" fill="#f4333c" />
        <rect x="1359" y="1628" width="148" height="157" fill="none" stroke="#f4333c" strokeWidth="4" />
      </Markup>
    </Page>
  );
}
